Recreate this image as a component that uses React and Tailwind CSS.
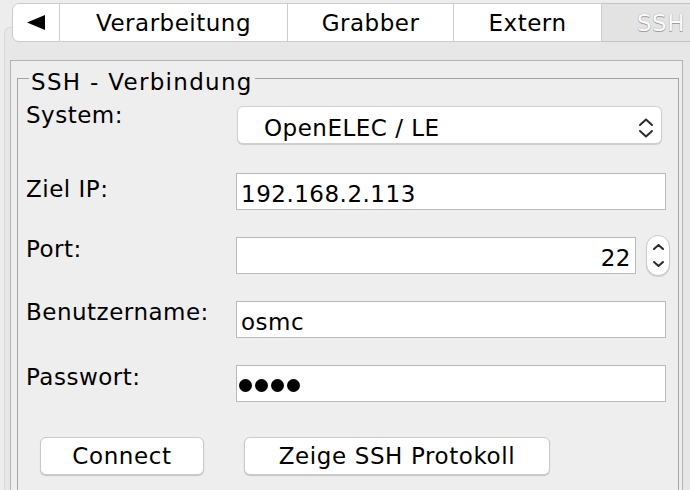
import React from 'react';

function Chevrons({ className }) {
  return (
    <svg className={className} viewBox="0 0 16 20" fill="none" stroke="#2b2b2b" strokeWidth="2" strokeLinecap="round" strokeLinejoin="round">
      <path d="M2 7 L8 1.5 L14 7" />
      <path d="M2 13 L8 18.5 L14 13" />
    </svg>
  );
}

function Field({ children, className = '' }) {
  return (
    <div className={`h-[37px] bg-white border border-[#b9b9b9] px-[4px] pt-[9px] leading-[22px] ${className}`}>
      {children}
    </div>
  );
}

function Button({ children, className = '' }) {
  return (
    <button className={`h-[38px] bg-white border border-[#c9c9c9] rounded-[6px] shadow-[0_1px_1px_rgba(0,0,0,0.18)] leading-[22px] text-black tracking-[0.6px] ${className}`}>
      {children}
    </button>
  );
}

const tabs = [
  { label: 'Verarbeitung', w: 'w-[228px]' },
  { label: 'Grabber', w: 'w-[166px]' },
  { label: 'Extern', w: 'w-[148px]' },
];

export default function App() {
  return (
    <div className="w-[690px] h-[490px] overflow-hidden bg-[#ededed] text-[23px] tracking-[0.5px] text-black" style={{ fontFamily: '"DejaVu Sans", "Liberation Sans", sans-serif' }}>
      {/* tab strip */}
      <div className="relative z-10 flex pt-[3px] pl-[12px] h-[42px]">
        <div className="w-[48px] shrink-0 h-[39px] flex items-center justify-center bg-white border border-[#cbcbcb] rounded-l-[7px]">
          <svg width="18" height="15" viewBox="0 0 18 15"><polygon points="0,7.5 18,0 18,15" fill="#000" /></svg>
        </div>
        {tabs.map((t) => (
          <div key={t.label} className={`${t.w} shrink-0 h-[39px] flex items-center justify-center bg-white border-y border-r border-[#cbcbcb] leading-[22px]`}>
            {t.label}
          </div>
        ))}
        <div className="w-[118px] shrink-0 h-[39px] flex items-center justify-center bg-[#e3e3e3] border-y border-[#c4c4c4] leading-[22px] text-[#fbfbfb] [text-shadow:0_0_1px_#8a8a8a,0_1px_0_#a0a0a0]">
          SSH
        </div>
      </div>

      {/* tabbed pane */}
      <div className="-mt-[15px] ml-[4px] w-[720px] h-[480px] border border-[#d6d6d6] rounded-[6px] bg-[#e7e7e7] pt-[32px] pl-[5px]">
        <div className="w-[673px] h-[440px] bg-[#eeeeee] border border-[#b3b3b3] pt-[10px] pl-[6px]">
          <fieldset className="w-[662px] h-[440px] border border-[#a4a4a4] pt-[19px] pl-[8px] pr-0">
            <legend className="h-[14px] leading-[22px] ml-[3px] px-[2px] whitespace-nowrap tracking-[1.3px]">SSH - Verbindung</legend>

            {/* System */}
            <div className="flex items-start h-[69px]">
              <div className="w-[211px] leading-[22px]">System:</div>
              <div className="mt-[2px] w-[425px] h-[38px] bg-white border border-[#cfcfcf] rounded-[6px] shadow-[0_1px_1px_rgba(0,0,0,0.15)] flex items-start justify-between pl-[26px] pr-[7px] pt-[10px] leading-[22px]">
                <span>OpenELEC / LE</span>
                <Chevrons className="w-[16px] h-[20px] mt-[1px]" />
              </div>
            </div>

            {/* Ziel IP */}
            <div className="flex items-start h-[64px]">
              <div className="w-[210px] mt-[5px] leading-[22px]">Ziel IP:</div>
              <Field className="w-[430px]">192.168.2.113</Field>
            </div>

            {/* Port */}
            <div className="flex items-start h-[64px]">
              <div className="w-[210px] mt-[1px] leading-[22px]">Port:</div>
              <Field className="w-[400px] text-right">22</Field>
              <div className="ml-[10px] -mt-[2px] w-[24px] h-[41px] bg-white border border-[#c9c9c9] rounded-full shadow-[0_1px_1px_rgba(0,0,0,0.15)] flex flex-col items-center justify-center gap-[11px]">
                <svg width="11" height="6" viewBox="0 0 11 6" fill="none" stroke="#2b2b2b" strokeWidth="2" strokeLinecap="round" strokeLinejoin="round"><path d="M1 5 L5.5 1 L10 5" /></svg>
                <svg width="11" height="6" viewBox="0 0 11 6" fill="none" stroke="#2b2b2b" strokeWidth="2" strokeLinecap="round" strokeLinejoin="round"><path d="M1 1 L5.5 5 L10 1" /></svg>
              </div>
            </div>

            {/* Benutzername */}
            <div className="flex items-start h-[64px]">
              <div className="w-[210px] leading-[22px]">Benutzername:</div>
              <Field className="w-[430px]">osmc</Field>
            </div>

            {/* Passwort */}
            <div className="flex items-start h-[37px]">
              <div className="w-[210px] mt-[1px] leading-[22px]">Passwort:</div>
              <div className="w-[430px] h-[37px] bg-white border border-[#b9b9b9] flex items-center gap-[3px] pl-[2px] pt-[4px]">
                <span className="w-[13px] h-[13px] rounded-full bg-black" />
                <span className="w-[13px] h-[13px] rounded-full bg-black" />
                <span className="w-[13px] h-[13px] rounded-full bg-black" />
                <span className="w-[13px] h-[13px] rounded-full bg-black" />
              </div>
            </div>

            {/* buttons */}
            <div className="flex mt-[35px] pl-[14px] gap-[40px]">
              <Button className="w-[164px]">Connect</Button>
              <Button className="w-[306px]">Zeige SSH Protokoll</Button>
            </div>
          </fieldset>
        </div>
      </div>
    </div>
  );
}
